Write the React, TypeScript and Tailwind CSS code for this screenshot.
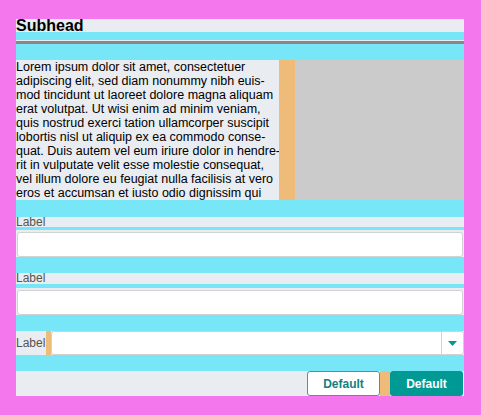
const lines = [
  "Lorem ipsum dolor sit amet, consectetuer",
  "adipiscing elit, sed diam nonummy nibh euis-",
  "mod tincidunt ut laoreet dolore magna aliquam",
  "erat volutpat. Ut wisi enim ad minim veniam,",
  "quis nostrud exerci tation ullamcorper suscipit",
  "lobortis nisl ut aliquip ex ea commodo conse-",
  "quat. Duis autem vel eum iriure dolor in hendre-",
  "rit in vulputate velit esse molestie consequat,",
  "vel illum dolore eu feugiat nulla facilisis at vero",
  "eros et accumsan et iusto odio dignissim qui",
];

function Spacer({ h }: { h: string }) {
  return <div className={`${h} bg-[#77e7f8]`} />;
}

function TextField() {
  return (
    <div className="bg-[#e9ecf0] px-[1px]">
      <input
        type="text"
        className="block h-[25px] w-full rounded-[3px] border border-[#d2d2d2] bg-white outline-none"
      />
    </div>
  );
}

export default function App() {
  return (
    <div
      className="h-[415px] w-[481px] bg-[#f477ed] pl-[16px] pt-[19px]"
      style={{ fontFamily: '"Liberation Sans", Arial, sans-serif' }}
    >
      <div className="flex w-[448px] flex-col">
        {/* heading */}
        <h2 className="h-[13px] bg-[#e9ecf0] text-[16px] font-bold leading-[13px] text-black">
          Subhead
        </h2>
        <Spacer h="h-[8px]" />
        <div className="h-[1px] bg-[#e9ecf0]" />
        <div className="h-[3px] bg-[#878787]" />
        <Spacer h="h-[16px]" />

        {/* body copy + media */}
        <div className="flex h-[140px]">
          <p className="w-[263px] overflow-hidden whitespace-nowrap bg-[#e9ecf0] text-[12.5px] leading-[14px] text-black">
            {lines.map((l) => (
              <span key={l} className="block">
                {l}
              </span>
            ))}
          </p>
          <div className="w-[16px] bg-[#eebb79]" />
          <div className="flex-1 bg-[#cbcbcb]" />
        </div>
        <Spacer h="h-[17px]" />

        {/* field 1 */}
        <label className="h-[10px] bg-[#e9ecf0] text-[12px] leading-[10px] text-[#555]">
          Label
        </label>
        <Spacer h="h-[3px]" />
        <div className="h-[2px] bg-[#e9ecf0]" />
        <TextField />
        <Spacer h="h-[16px]" />

        {/* field 2 */}
        <label className="h-[11px] bg-[#e9ecf0] text-[12px] leading-[11px] text-[#555]">
          Label
        </label>
        <Spacer h="h-[4px]" />
        <div className="h-[2px] bg-[#e9ecf0]" />
        <TextField />
        <Spacer h="h-[16px]" />

        {/* inline select */}
        <div className="flex h-[24px] items-stretch bg-[#e9ecf0]">
          <span className="flex items-center pr-[1px] text-[12px] text-[#555]">Label</span>
          <div className="w-[5px] bg-[#eebb79]" />
          <div className="flex flex-1 items-stretch rounded-[3px] border border-[#d2d2d2] bg-white">
            <div className="flex-1" />
            <div className="flex w-[22px] items-center justify-center border-l border-[#d2d2d2]">
              <svg width="9" height="5" viewBox="0 0 9 5">
                <path d="M0 0h9L4.5 5z" fill="#009993" />
              </svg>
            </div>
          </div>
        </div>
        <Spacer h="h-[16px]" />

        {/* actions */}
        <div className="flex h-[25px] justify-end bg-[#e9ecf0] pr-[1px]">
          <button className="w-[73px] rounded-[3px] border border-[#2ea3a0] bg-white text-[12px] font-bold text-[#13807d]">
            Default
          </button>
          <div className="w-[10px] bg-[#eebb79]" />
          <button className="w-[73px] rounded-[3px] bg-[#009993] text-[12px] font-bold text-white">
            Default
          </button>
        </div>
      </div>
    </div>
  );
}
